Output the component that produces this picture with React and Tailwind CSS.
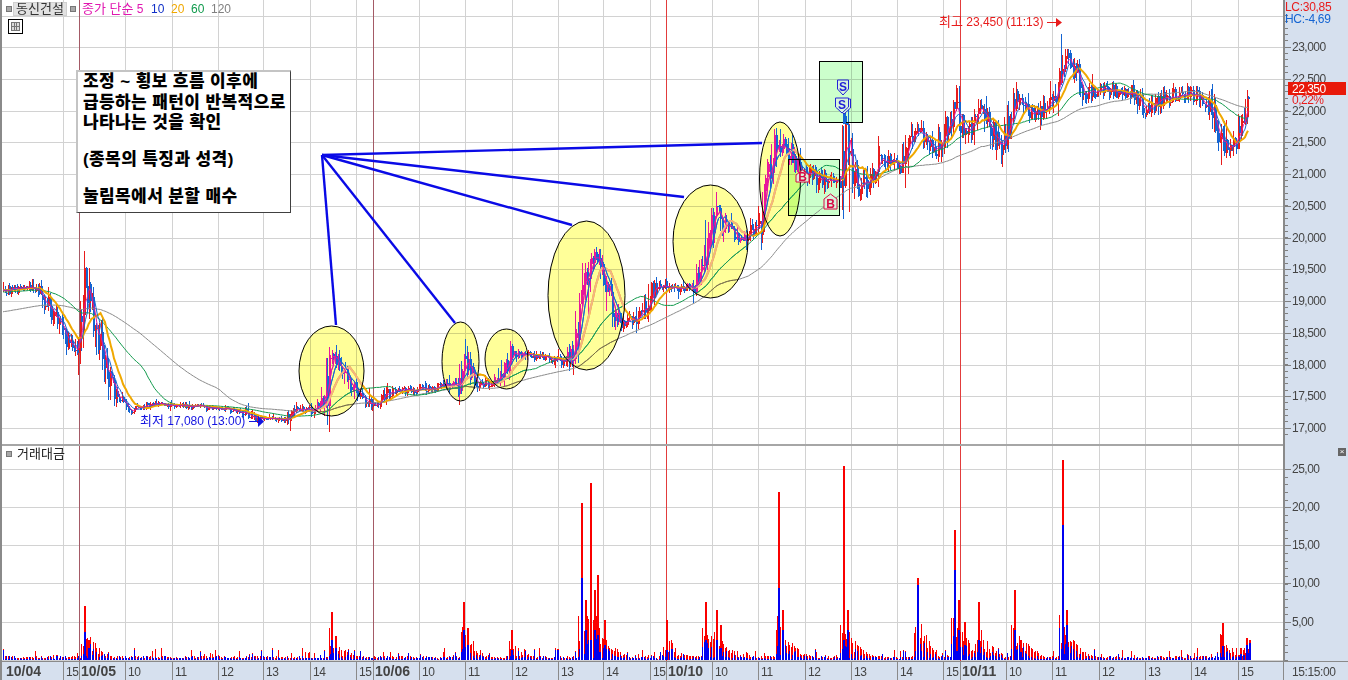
import React from "react";

function rng(seed) {
  let a = seed;
  return () => {
    a |= 0; a = (a + 0x6d2b79f5) | 0;
    let t = Math.imul(a ^ (a >>> 15), 1 | a);
    t = (t + Math.imul(t ^ (t >>> 7), 61 | t)) ^ t;
    return ((t ^ (t >>> 14)) >>> 0) / 4294967296;
  };
}

const KEY = [[3,290],[20,288],[40,290],[50,310],[65,340],[78,352],[84,280],[92,312],[105,365],[115,395],[130,410],[150,405],[180,405],[210,408],[240,410],[262,421],[285,418],[295,408],[315,410],[325,398],[331,350],[340,368],[350,385],[365,400],[376,405],[390,392],[420,390],[450,385],[458,385],[463,350],[470,372],[480,385],[500,380],[510,352],[525,355],[545,358],[565,362],[575,350],[590,250],[600,272],[610,300],[620,325],[640,315],[655,285],[680,288],[695,285],[705,250],[715,205],[725,228],[740,240],[760,222],[775,140],[790,152],[800,168],[820,180],[840,178],[846,120],[851,172],[860,190],[880,160],[900,168],[915,130],[935,150],[955,105],[965,140],[980,105],[1000,150],[1015,98],[1035,115],[1055,100],[1063,58],[1075,72],[1085,95],[1100,90],[1130,92],[1145,108],[1165,98],[1190,92],[1210,105],[1225,148],[1235,142],[1245,120],[1249,98]];

function interp(x) {
  for (let i = 1; i < KEY.length; i++) {
    if (x <= KEY[i][0]) {
      const [a, b] = KEY[i - 1], [c, d] = KEY[i];
      return b + ((d - b) * (x - a)) / (c - a);
    }
  }
  return KEY[KEY.length - 1][1];
}

function makeSeries() {
  const r = rng(77);
  const bars = [];
  let prev = interp(3);
  for (let x = 3; x <= 1249; x += 1.5) {
    const slope = Math.abs(interp(x + 3) - interp(x - 3));
    const base = x < 110 ? 4 : x < 300 ? 2.2 : x < 560 ? 3 : x < 770 ? 4.5 : 6;
    const vol = base + slope * 0.55;
    const c = interp(x) + (r() - 0.5) * vol * 2;
    const o = prev;
    const kick = r() < 0.1 ? 2.4 : 1;
    const hi = Math.min(o, c) - r() * vol * kick;
    const lo = Math.max(o, c) + r() * vol * (r() < 0.1 ? 2 : 1);
    bars.push({ x, o, c, hi, lo, up: c < o });
    prev = c;
  }
  return bars;
}

function ma(bars, n, pad) {
  const pts = [];
  let sum = pad * n;
  const q = [];
  for (let i = 0; i < n; i++) q.push(pad);
  for (const b of bars) {
    q.push(b.c);
    sum += b.c - q.shift();
    pts.push(`${b.x.toFixed(1)},${(sum / n).toFixed(1)}`);
  }
  return pts.join(" ");
}

const bars = makeSeries();
const candlePaths = (() => {
  const d = { red: "", blue: "", redB: "", blueB: "" };
  for (const b of bars) {
    const x = Math.round(b.x) + 0.5;
    const k = b.up ? "red" : "blue";
    d[k] += `M${x} ${b.hi.toFixed(0)}V${b.lo.toFixed(0)}`;
    const t = Math.min(b.o, b.c), h = Math.max(Math.abs(b.o - b.c), 1);
    d[k + "B"] += `M${x} ${t.toFixed(0)}v${h.toFixed(0)}`;
  }
  return d;
})();
const MAS = {
  m5: ma(bars, 5, 290),
  m10: ma(bars, 8, 290),
  m20: ma(bars, 15, 290),
  m60: ma(bars, 42, 292),
  m120: ma(bars, 92, 312),
};

const SPIKES = [[84,606,632],[88,640,648],[331,612,640],[335,636,648],[463,602,630],[467,628,645],[511,630,650],[581,503,578],[585,600,630],[590,483,640],[594,590,630],[597,575,635],[604,620,645],[666,620,650],[705,602,640],[716,610,640],[720,625,648],[778,492,588],[782,610,630],[843,466,640],[847,610,630],[917,578,585],[954,530,570],[958,600,630],[964,622,645],[978,602,640],[1014,590,630],[1020,640,652],[1062,460,525],[1066,610,625],[1222,623,646],[1240,648,654],[1243,650,655],[1246,638,645],[1249,640,643]];

const volBars = (() => {
  const r = rng(9);
  let red = "", blue = "", redS = "", blueS = "";
  for (let x = 3; x <= 1249; x += 1.5) {
    const px = Math.round(x) + 0.5;
    let h = r() < 0.2 ? 3 + r() * 9 : 1.5 + r() * 3;
    let bh = h * (r() < 0.5 ? 0.9 : 0.3);
    for (const [sx, top] of SPIKES) {
      const dx = x - sx;
      if (dx > -4 && dx < 36) {
        const amp = Math.min(660 - top, 70) * 0.7 * Math.exp(-Math.max(dx, 0) / 13) * (0.3 + r() * 0.7);
        if (amp > h) { h = amp; bh = amp * r() * 0.8; }
      }
    }
    red += `M${px} 660v${-h.toFixed(1)}`;
    blue += `M${px} 660v${-bh.toFixed(1)}`;
  }
  for (const [sx, top, bt] of SPIKES) {
    redS += `M${sx + 0.5} 660V${top}`;
    blueS += `M${sx + 0.5} 660V${bt}`;
  }
  return { red, blue, redS, blueS };
})();

const ELLIPSES = [[331.5,371,32.5,45],[460.5,361.5,18.5,39.5],[506.5,359,21.5,30],[586.5,295.5,38.5,74.5],[710.5,241.5,37.5,56.5],[780,179,20.5,57]];
const DAYX = [79, 373, 666, 960];
const GRIDX = [63,125,172,218,263,310,356,419,465,512,558,603,650,712,758,805,851,897,943,1006,1052,1099,1145,1191,1238];
const PRICES = [[23000,47],[22500,79],[22000,111],[21500,142],[21000,174],[20500,206],[20000,238],[19500,269],[19000,301],[18500,333],[18000,365],[17500,396],[17000,428]];
const GRIDY = [16, ...PRICES.map((p) => p[1])];
const VOLY = [[469,"25,00"],[507,"20,00"],[545,"15,00"],[583,"10,00"],[622,"5,00"]];
const TIMES = [[4,"10/04",1],[63,"15"],[79,"10/05",1],[125,"10"],[172,"11"],[218,"12"],[263,"13"],[310,"14"],[356,"15"],[373,"10/06",1],[419,"10"],[465,"11"],[512,"12"],[558,"13"],[603,"14"],[650,"15"],[666,"10/10",1],[712,"10"],[758,"11"],[805,"12"],[851,"13"],[897,"14"],[943,"15"],[960,"10/11",1],[1006,"10"],[1052,"11"],[1099,"12"],[1145,"13"],[1191,"14"],[1238,"15"]];
const KR = "'Liberation Sans','Noto Sans CJK KR',sans-serif";

function Grid({ y1, y2, ys }) {
  return (
    <g stroke="#d2d2d2" strokeWidth="1" shapeRendering="crispEdges">
      {GRIDX.map((x) => <line key={x} x1={x + 0.5} x2={x + 0.5} y1={y1} y2={y2} />)}
      {ys.map((y) => <line key={y} x1={2} x2={1283} y1={y + 0.5} y2={y + 0.5} />)}
    </g>
  );
}

function DayLines({ y1, y2 }) {
  return (
    <g strokeWidth="1" shapeRendering="crispEdges">
      {DAYX.map((x, i) => (
        <line key={x} x1={x + 0.5} x2={x + 0.5} y1={y1} y2={y2} stroke={i < 2 ? "#a45a66" : "#e23c3c"} />
      ))}
    </g>
  );
}

function Series({ c }) {
  return (
    <g fill="none">
      <g shapeRendering="crispEdges">
        <path d={candlePaths.red} stroke={c.red} strokeWidth="1" />
        <path d={candlePaths.blue} stroke={c.blue} strokeWidth="1" />
        <path d={candlePaths.redB} stroke={c.red} strokeWidth="2" />
        <path d={candlePaths.blueB} stroke={c.blue} strokeWidth="2" />
      </g>
      <polyline points={MAS.m120} stroke={c.gray} strokeWidth="1" />
      <polyline points={MAS.m60} stroke={c.green} strokeWidth="1" />
      <polyline points={MAS.m20} stroke={c.orange} strokeWidth="2" />
      <polyline points={MAS.m10} stroke={c.blue} strokeWidth="1" />
      <polyline points={MAS.m5} stroke={c.pink} strokeWidth="1" />
    </g>
  );
}

function pentagon(x, y, w, h, down) {
  const l = x - w / 2, r = x + w / 2;
  return down
    ? `${l},${y} ${r},${y} ${r},${y + h - 6} ${x},${y + h} ${l},${y + h - 6}`
    : `${x},${y} ${r},${y + 5} ${r},${y + h} ${l},${y + h} ${l},${y + 5}`;
}

function Marker({ x, y, kind, w = 13, h = 15, shadow }) {
  const s = kind === "S";
  const col = s ? "#2222d8" : "#d80a46";
  return (
    <g>
      {shadow && <polygon points={pentagon(x + 2, y + 1, w, h, s)} fill="#d8f4dc" stroke={col} strokeWidth="1" />}
      <polygon points={pentagon(x, y, w, h, s)} fill="#d8f4dc" stroke={col} strokeWidth="1" />
      <text x={x} y={s ? y + 10.5 : y + h - 1.5} textAnchor="middle" fontSize="12" fontWeight="700" fill={col} style={{ fontFamily: KR }}>{kind}</text>
    </g>
  );
}

function PriceChart() {
  const normal = { red: "#e81c1c", blue: "#1464d2", orange: "#f0a800", green: "#109a4c", gray: "#8c8c8c", pink: "#e018a0" };
  const inEllipse = { red: "#e8189a", blue: "#1468d4", orange: "#f2b484", green: "#18985c", gray: "#7a6e3c", pink: "#e018a0" };
  return (
    <svg viewBox="2 0 1281 444" className="block w-[1281px] h-[444px]">
      <defs>
        <clipPath id="ell">
          {ELLIPSES.map((e, i) => <ellipse key={i} cx={e[0]} cy={e[1]} rx={e[2]} ry={e[3]} />)}
        </clipPath>
      </defs>
      <Grid y1={0} y2={444} ys={GRIDY} />
      <DayLines y1={0} y2={444} />
      {ELLIPSES.map((e, i) => (
        <ellipse key={i} cx={e[0]} cy={e[1]} rx={e[2]} ry={e[3]} fill="#ffff99" className="mix-blend-multiply" />
      ))}
      <rect x="819.5" y="61.5" width="43" height="61" fill="#ccffcc" className="mix-blend-multiply" />
      <rect x="788.5" y="159.5" width="51" height="56" fill="#ccffcc" className="mix-blend-multiply" />
      <Series c={normal} />
      <g clipPath="url(#ell)"><Series c={inEllipse} /></g>
      {ELLIPSES.map((e, i) => (
        <ellipse key={i} cx={e[0]} cy={e[1]} rx={e[2]} ry={e[3]} fill="none" stroke="#000" strokeWidth="1" />
      ))}
      <g fill="none" stroke="#000" strokeWidth="1" shapeRendering="crispEdges">
        <rect x="819.5" y="61.5" width="43" height="61" />
        <rect x="788.5" y="159.5" width="51" height="56" />
      </g>
      <g stroke="#0a0ae6" strokeWidth="2.4" fill="none">
        <line x1="322" y1="155" x2="336" y2="325" />
        <line x1="322" y1="155" x2="455" y2="323" />
        <line x1="322" y1="155" x2="572" y2="225" />
        <line x1="322" y1="155" x2="684" y2="197" />
        <line x1="322" y1="155" x2="762" y2="143" />
      </g>
      <path d="M844.5 112V124" stroke="#1464d2" strokeWidth="3" />
      <Marker x={843} y={80} kind="S" w={11} h={15} />
      <Marker x={842} y={98} kind="S" shadow />
      <Marker x={802.5} y={170} kind="B" h={12} />
      <Marker x={830.5} y={194} kind="B" />
      <text x="140" y="425" fontSize="12" fill="#1414e0" style={{ fontFamily: KR }}><tspan fontSize="13">최저</tspan> 17,080 (13:00)</text>
      <path d="M249 421.5H259" stroke="#1414e0" strokeWidth="1" />
      <polygon points="258,416 264,421.5 258,427" fill="#1414e0" />
      <text x="939" y="26" fontSize="12" fill="#e81c1c" style={{ fontFamily: KR }}><tspan fontSize="13">최고</tspan> 23,450 (11:13)</text>
      <path d="M1047 22.5H1057" stroke="#e81c1c" strokeWidth="1" />
      <polygon points="1056,18 1062,22.5 1056,27" fill="#e81c1c" />
    </svg>
  );
}

function VolumeChart() {
  return (
    <svg viewBox="2 446 1281 215" className="block w-[1281px] h-[215px]">
      <Grid y1={446} y2={661} ys={[...VOLY.map((v) => v[0]), 660]} />
      <DayLines y1={446} y2={661} />
      <g fill="none" shapeRendering="crispEdges">
        <path d={volBars.red} stroke="#fa0000" strokeWidth="1" />
        <path d={volBars.blue} stroke="#0000f0" strokeWidth="1" />
        <path d={volBars.redS} stroke="#fa0000" strokeWidth="2" />
        <path d={volBars.blueS} stroke="#0000f0" strokeWidth="2" />
      </g>
    </svg>
  );
}

function Axis() {
  const minor = [];
  for (let y = 15; y < 440; y += 6.35) minor.push(Math.round(y));
  const vminor = [];
  for (let y = 469; y < 660; y += 7.64) vminor.push(Math.round(y));
  return (
    <svg viewBox="1283 0 65 661" className="block w-[65px] h-[661px]">
      <g stroke="#7f7f7f" strokeWidth="1" shapeRendering="crispEdges">
        {minor.map((y, i) => <line key={i} x1="1285" x2="1288" y1={y + 0.5} y2={y + 0.5} />)}
        {PRICES.map((p) => <line key={p[1]} x1="1285" x2="1291" y1={p[1] + 0.5} y2={p[1] + 0.5} />)}
        {vminor.map((y, i) => <line key={i} x1="1285" x2="1288" y1={y + 0.5} y2={y + 0.5} />)}
        {VOLY.map((v) => <line key={v[0]} x1="1285" x2="1291" y1={v[0] + 0.5} y2={v[0] + 0.5} />)}
      </g>
      <g fontSize="12" letterSpacing="-0.5" fill="#444" style={{ fontFamily: KR }}>
        {PRICES.map((p) => <text key={p[0]} x="1292" y={p[1] + 4}>{p[0].toLocaleString("en-US")}</text>)}
        {VOLY.map((v) => <text key={v[0]} x="1292" y={v[0] + 4}>{v[1]}</text>)}
      </g>
      <text x="1285" y="11" fontSize="12" letterSpacing="-0.3" fill="#e81c1c" style={{ fontFamily: KR }}>LC:30,85</text>
      <text x="1285" y="23" fontSize="12" letterSpacing="-0.3" fill="#1464d2" style={{ fontFamily: KR }}>HC:-4,69</text>
      <rect x="1288" y="82" width="58" height="13" fill="#e8190a" />
      <text x="1292" y="93" fontSize="12" letterSpacing="-0.5" fill="#fff" style={{ fontFamily: KR }}>22,350</text>
      <text x="1292" y="104" fontSize="12" letterSpacing="-0.5" fill="#e81c1c" style={{ fontFamily: KR }}>0,22%</text>
    </svg>
  );
}

function TimeAxis() {
  return (
    <svg viewBox="0 661 1348 19" className="block w-[1348px] h-[19px]">
      <g stroke="#8a8a8a" strokeWidth="1" shapeRendering="crispEdges">
        <line x1="0" x2="1348" y1="661.5" y2="661.5" />
        {TIMES.slice(1).map((t) => <line key={t[0]} x1={t[0] + 0.5} x2={t[0] + 0.5} y1="661" y2="680" />)}
        <line x1="1283.5" x2="1283.5" y1="661" y2="680" />
      </g>
      <rect x="0" y="661" width="2" height="19" fill="#8a8a8a" />
      <g fill="#444" style={{ fontFamily: KR }}>
        {TIMES.map((t) => (
          <text key={t[0]} x={t[2] ? t[0] + 2 : t[0] + 3} y="676" fontSize={t[2] ? 14 : 12} fontWeight={t[2] ? 700 : 400} letterSpacing={t[2] ? 0 : -0.3}>{t[1]}</text>
        ))}
        <text x="1292" y="676" fontSize="12" letterSpacing="-0.4">15:15:00</text>
      </g>
    </svg>
  );
}

function Sq() {
  return <span className="block w-[6px] h-[6px] shrink-0 bg-[#a8a8a8] border border-[#777]" />;
}

export default function App() {
  return (
    <div className="w-[1348px] h-[680px] overflow-hidden flex flex-col bg-white text-black font-['Liberation_Sans','Noto_Sans_CJK_KR',sans-serif]">
      <div className="flex h-[661px]">
        <div className="relative w-[1283px] border-l-2 border-[#8a8a8a]">
          <PriceChart />
          <div className="h-[2px] bg-[#a6a6a6]" />
          <VolumeChart />

          <div className="absolute left-[4px] top-[2px] flex items-center h-[14px] text-[12px] leading-[14px]">
            <Sq />
            <span className="ml-[1px] w-[54px] h-[14px] bg-[#e2e2e2] border border-[#d0d0d0] text-[#333] text-center text-[13px] leading-[12px]">동신건설</span>
            <span className="ml-[3px] flex"><Sq /></span>
            <span className="ml-[6px] w-[62px] text-[#e018b0]"><span className="text-[13px]">종가 단순</span> 5</span>
            <span className="ml-[7px] w-[20px] text-[#1030c8]">10</span>
            <span className="w-[20px] text-[#f0a800]">20</span>
            <span className="w-[20px] text-[#109a4c]">60</span>
            <span className="text-[#808080]">120</span>
          </div>

          <div className="absolute left-[6px] top-[19px] w-[15px] h-[15px] border border-black p-[2px] bg-white">
            <div className="grid grid-cols-3 gap-px w-full h-full bg-[#777] border border-[#777]">
              {[0,1,2,3,4,5].map((i) => <span key={i} className="bg-[#dcdcdc]" />)}
            </div>
          </div>

          <div className="absolute left-[74px] top-[70px] w-[215px] h-[143px] bg-white border-t-2 border-l-2 border-t-[#c4c4c4] border-l-[#c4c4c4] border-r border-b border-r-[#404040] border-b-[#404040] pl-[5px] text-[17px] tracking-[0.4px] leading-[20.5px] font-black whitespace-nowrap">
            <div>조정 ~ 횡보 흐름 이후에</div>
            <div>급등하는 패턴이 반복적으로</div>
            <div>나타나는 것을 확인</div>
            <div className="mt-[16.5px]">(종목의 특징과 성격)</div>
            <div className="mt-[16.5px]">눌림목에서 분할 매수</div>
          </div>

          <div className="absolute left-[4px] top-[447px] flex items-center gap-[5px] text-[13px] leading-[14px] text-[#222]">
            <Sq />
            <span>거래대금</span>
          </div>
          <div className="absolute left-[1336px] top-[448px] z-10 w-[8px] h-[8px] bg-[#666] text-white text-[8px] leading-[8px] text-center">×</div>
        </div>
        <div className="w-[65px] bg-[#d6e0ee]">
          <div className="relative">
            <div className="absolute left-0 top-0 w-[2px] h-[661px] bg-[#8a8a8a]" />
            <Axis />
          </div>
        </div>
      </div>
      <div className="h-[19px] bg-[#d6e0ee]">
        <TimeAxis />
      </div>
    </div>
  );
}
